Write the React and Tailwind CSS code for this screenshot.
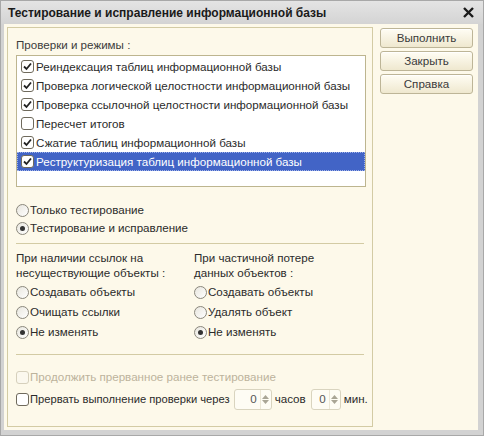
import React from 'react';

const font = { fontFamily: '"Liberation Sans", Arial, sans-serif' };

function CheckBox({ checked, disabled }) {
  return (
    <span
      className={`w-[13px] h-[13px] shrink-0 rounded-[3px] border flex items-center justify-center ${
        disabled ? 'border-[#d6d0bc] bg-[#fbf8ee]' : 'border-[#6f6a5c] bg-white'
      }`}
    >
      {checked && (
        <svg width="9" height="9" viewBox="0 0 9 9">
          <path d="M1 4.5 L3.5 7 L8 1.5" fill="none" stroke="#222" strokeWidth="1.8" />
        </svg>
      )}
    </span>
  );
}

function Radio({ checked }) {
  return (
    <span className="w-[13px] h-[13px] shrink-0 rounded-full border border-[#8a877c] bg-gradient-to-br from-[#e8e6de] to-white flex items-center justify-center">
      {checked && <span className="w-[5px] h-[5px] rounded-full bg-[#333]" />}
    </span>
  );
}

function RadioRow({ label, checked }) {
  return (
    <div className="h-[20px] flex items-center gap-[1px] whitespace-nowrap">
      <Radio checked={checked} />
      <span>{label}</span>
    </div>
  );
}

function SpinBox({ width }) {
  return (
    <div className={`${width} h-[21px] shrink-0 rounded-[3px] border border-[#d9d4bf] bg-[#fefcf4] flex items-center`}>
      <span className="flex-1 text-right pr-[3px] text-[#555]">0</span>
      <div className="w-[11px] h-full flex flex-col items-center justify-center gap-[1px] border-l border-[#ece7d6]">
        <svg width="7" height="4" viewBox="0 0 7 4"><path d="M0 4 L3.5 0 L7 4 Z" fill="#a9a595" /></svg>
        <svg width="7" height="4" viewBox="0 0 7 4"><path d="M0 0 L3.5 4 L7 0 Z" fill="#a9a595" /></svg>
      </div>
    </div>
  );
}

function Button({ children }) {
  return (
    <button className="h-[20px] w-full rounded-[3px] border border-[#bdb597] bg-gradient-to-b from-[#fffdf4] to-[#efe8cf] text-[#3a3a3a] text-[11.6px] leading-none shadow-[inset_0_1px_0_#ffffff]">
      {children}
    </button>
  );
}

const checks = [
  { label: 'Реиндексация таблиц информационной базы', checked: true },
  { label: 'Проверка логической целостности информационной базы', checked: true },
  { label: 'Проверка ссылочной целостности информационной базы', checked: true },
  { label: 'Пересчет итогов', checked: false },
  { label: 'Сжатие таблиц информационной базы', checked: true },
  { label: 'Реструктуризация таблиц информационной базы', checked: true, selected: true },
];

export default function App() {
  return (
    <div
      className="w-[484px] h-[436px] bg-[#d2d2d2] border border-[#a8a8a8] flex flex-col text-[11.6px] text-[#2b2b2b] overflow-hidden"
      style={font}
    >
      {/* Title bar */}
      <div className="h-[23px] shrink-0 flex items-center justify-between pl-[7px] pr-[9px] bg-gradient-to-b from-[#e4e4e4] to-[#d4d4d4]">
        <span className="font-bold text-[12px] text-[#1a1a1a]">Тестирование и исправление информационной базы</span>
        <svg width="11" height="11" viewBox="0 0 11 11">
          <path d="M1 1 L10 10 M10 1 L1 10" stroke="#1a1a1a" strokeWidth="2.4" />
        </svg>
      </div>

      {/* Body */}
      <div className="flex-1 ml-[3px] mr-[5px] mb-[5px] bg-[#fdf9ea] flex pl-[3px] pt-[3px] pb-[3px]">
        {/* Left panel */}
        <div className="w-[366px] border border-[#d3cba4] flex flex-col px-[8px] pt-[9px]">
          <div className="h-[15px] leading-[15px] text-[#3c3c3c]">Проверки и режимы :</div>

          <div className="mt-[3px] h-[132px] w-[350px] bg-white border border-[#bdb58f] pt-[1px]">
            {checks.map((c) => (
              <div
                key={c.label}
                className={`h-[19px] flex items-center gap-[2px] pl-[4px] whitespace-nowrap ${
                  c.selected ? 'bg-[#4264c6] text-white outline outline-1 outline-dotted outline-[#9fb2ea] -outline-offset-1' : ''
                }`}
              >
                <CheckBox checked={c.checked} />
                <span>{c.label}</span>
              </div>
            ))}
          </div>

          <div className="mt-[14px]">
            <div className="h-[18px] flex items-center gap-[1px]">
              <Radio />
              <span>Только тестирование</span>
            </div>
            <div className="h-[18px] flex items-center gap-[1px]">
              <Radio checked />
              <span>Тестирование и исправление</span>
            </div>
          </div>

          <div className="mt-[6px] border-t border-[#d3cba4]" />

          <div className="mt-[6px] grid grid-cols-[178px_1fr]">
            <div>
              <div className="leading-[15px]">При наличии ссылок на</div>
              <div className="leading-[15px]">несуществующие объекты :</div>
              <div className="mt-[2px]">
                <RadioRow label="Создавать объекты" />
                <RadioRow label="Очищать ссылки" />
                <RadioRow label="Не изменять" checked />
              </div>
            </div>
            <div>
              <div className="leading-[15px]">При частичной потере</div>
              <div className="leading-[15px]">данных объектов :</div>
              <div className="mt-[2px]">
                <RadioRow label="Создавать объекты" />
                <RadioRow label="Удалять объект" />
                <RadioRow label="Не изменять" checked />
              </div>
            </div>
          </div>

          <div className="mt-[12px] border-t border-[#d3cba4]" />

          <div className="mt-[11px] h-[22px] flex items-center gap-[1px] text-[#bcb39c] whitespace-nowrap">
            <CheckBox disabled />
            <span>Продолжить прерванное ранее тестирование</span>
          </div>
          <div className="h-[22px] flex items-center whitespace-nowrap">
            <CheckBox />
            <span className="ml-[1px] text-[11.2px]">Прервать выполнение проверки через</span>
            <div className="ml-[4px]"><SpinBox width="w-[38px]" /></div>
            <span className="ml-[3px]">часов</span>
            <div className="ml-[5px]"><SpinBox width="w-[30px]" /></div>
            <span className="ml-[3px]">мин.</span>
          </div>
        </div>

        {/* Buttons */}
        <div className="ml-[7px] w-[93px] flex flex-col gap-[3px] pt-[1px]">
          <Button>Выполнить</Button>
          <Button>Закрыть</Button>
          <Button>Справка</Button>
        </div>
      </div>
    </div>
  );
}
